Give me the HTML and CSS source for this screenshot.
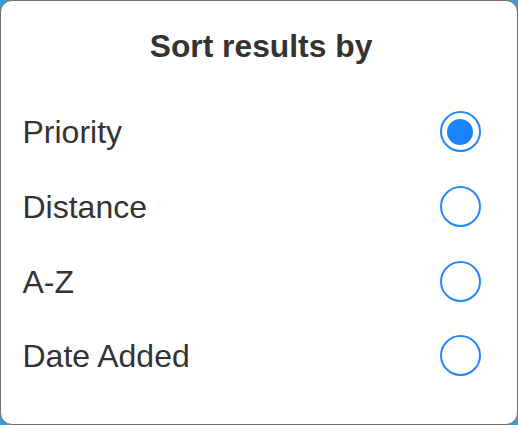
FILE: index.html
```html
<!DOCTYPE html>
<html>
<head>
<meta charset="utf-8">
<link rel="stylesheet" href="styles.css">
</head>
<body>
<div class="card">
  <h1 class="title">Sort results by</h1>
  <div class="options">
    <label class="row"><span class="label">Priority</span><span class="radio checked"></span></label>
    <label class="row"><span class="label">Distance</span><span class="radio"></span></label>
    <label class="row"><span class="label">A-Z</span><span class="radio"></span></label>
    <label class="row"><span class="label">Date Added</span><span class="radio"></span></label>
  </div>
</div>
</body>
</html>
```

FILE: styles.css
```css
html, body {
  margin: 0;
  padding: 0;
}
body {
  width: 518px;
  height: 425px;
  background: #3a9ad2;
  font-family: "Liberation Sans", Arial, sans-serif;
  color: #333333;
}
.card {
  box-sizing: border-box;
  width: 518px;
  height: 425px;
  background: #ffffff;
  border: 1.5px solid #6e6e6e;
  border-radius: 12px;
  padding: 0 36.5px 0 21.5px;
  display: flex;
  flex-direction: column;
}
.title {
  margin: 27.2px 0 0 0;
  padding-left: 19px;
  text-align: center;
  font-size: 31.8px;
  line-height: 36px;
  font-weight: bold;
}
.options {
  margin-top: 30.2px;
  display: flex;
  flex-direction: column;
}
.row {
  height: 74.7px;
  display: flex;
  align-items: center;
  justify-content: space-between;
}
.label {
  font-size: 32px;
  line-height: 36px;
  position: relative;
  top: 0.6px;
}
.radio {
  box-sizing: border-box;
  width: 41px;
  height: 41px;
  border: 2px solid #2288ff;
  border-radius: 50%;
  display: flex;
  align-items: center;
  justify-content: center;
}
.radio.checked::after {
  content: "";
  width: 26px;
  height: 26px;
  border-radius: 50%;
  background: #1b82ff;
}
```
